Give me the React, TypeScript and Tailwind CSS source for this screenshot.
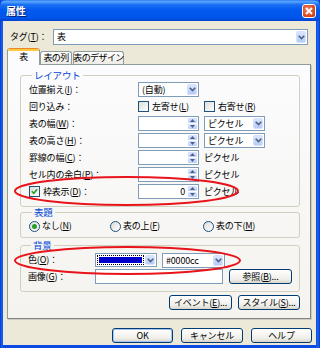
import React from "react";

const U = ({ c }: { c: string }) => <span className="underline underline-offset-[1px]">{c}</span>;

function Chevron() {
  return (
    <svg width="7" height="5" viewBox="0 0 7 5">
      <path d="M0.7 0.7 L3.5 3.5 L6.3 0.7" stroke="#4D6185" strokeWidth="1.6" fill="none" />
    </svg>
  );
}

function DropBtn() {
  return (
    <div className="w-[10px] shrink-0 self-stretch flex items-center justify-center rounded-[2px] border border-[#d6e2fd] bg-[linear-gradient(to_bottom,#dbe6fe,#b7cbf8)]">
      <Chevron />
    </div>
  );
}

function Select({ text, className }: { text: React.ReactNode; className: string }) {
  return (
    <div className={"flex h-[15px] border border-[#7F9DB9] bg-white p-px " + className}>
      <div className="flex-1 pl-[2px] leading-[11px] whitespace-nowrap overflow-hidden">{text}</div>
      <DropBtn />
    </div>
  );
}

function Tri({ up }: { up?: boolean }) {
  return (
    <svg width="5" height="3" viewBox="0 0 5 3">
      <path d={up ? "M0 3 L2.5 0 L5 3 Z" : "M0 0 L2.5 3 L5 0 Z"} fill="#4D6185" />
    </svg>
  );
}

function Spin({ value }: { value?: string }) {
  return (
    <div className="flex h-[15px] w-[61px] border border-[#7F9DB9] bg-white p-px">
      <div className="flex-1 text-right pr-[3px] leading-[11px]">{value}</div>
      <div className="w-[9px] flex flex-col gap-px">
        <div className="flex-1 flex items-center justify-center rounded-[1px] bg-[linear-gradient(to_bottom,#dbe6fe,#bccffa)]">
          <Tri up />
        </div>
        <div className="flex-1 flex items-center justify-center rounded-[1px] bg-[linear-gradient(to_bottom,#dbe6fe,#bccffa)]">
          <Tri />
        </div>
      </div>
    </div>
  );
}

function Check({ checked }: { checked?: boolean }) {
  return (
    <div className="w-[11px] h-[11px] shrink-0 border border-[#1C5180] bg-[linear-gradient(135deg,#dcdcd7,#ffffff)] flex items-center justify-center">
      {checked && (
        <svg width="7" height="7" viewBox="0 0 7 7">
          <path d="M0.8 3.2 L2.8 5.2 L6.2 1.2" stroke="#21A121" strokeWidth="1.6" fill="none" />
        </svg>
      )}
    </div>
  );
}

function Radio({ on }: { on?: boolean }) {
  return (
    <div className="w-[11px] h-[11px] shrink-0 rounded-full border border-[#1C5180] bg-[linear-gradient(135deg,#dcdcd7,#ffffff)] flex items-center justify-center">
      {on && <div className="w-[5px] h-[5px] rounded-full bg-[#2a9c2a]" />}
    </div>
  );
}

function Btn({ children, className }: { children: React.ReactNode; className: string }) {
  return (
    <div
      className={
        "h-[15px] border border-[#003C74] rounded-[3px] bg-[linear-gradient(to_bottom,#ffffff,#f0efea_70%,#d8d5c9)] flex items-center justify-center leading-[11px] whitespace-nowrap " +
        className
      }
    >
      {children}
    </div>
  );
}

function Group({ title, children, className }: { title: string; children: React.ReactNode; className: string }) {
  return (
    <fieldset className={"border border-[#D0D0BF] rounded-[3px] " + className}>
      <legend className="ml-[3px] px-[2px] text-[#0046D5] leading-[10px] text-[9.5px]">{title}</legend>
      {children}
    </fieldset>
  );
}

export default function App() {
  return (
    <div className="relative w-[320px] h-[348px] overflow-hidden font-['Noto_Sans_CJK_JP',sans-serif] text-[9px] leading-[12px] tracking-[-0.2px] whitespace-nowrap text-black bg-[linear-gradient(to_right,#0831d9,#166aee_2px,#0a4ae0_3px,#0a4ae0_316px,#166aee_318px,#0831d9)] flex flex-col">
      {/* Title bar */}
      <div className="h-[21px] shrink-0 flex items-center justify-between pl-[6px] pr-[4px] rounded-t-[6px] bg-[linear-gradient(to_bottom,#2c7cf5_0%,#5aa6ff_8%,#1a6ff3_22%,#0058ee_50%,#0055ea_85%,#0043cf_100%)]">
        <span className="text-white font-bold text-[10px] leading-[13px] [text-shadow:1px_1px_0_#0a1e6e]">属性</span>
        <div className="w-[14px] h-[14px] rounded-[3px] border border-white bg-[radial-gradient(circle_at_40%_40%,#f08a6a,#dd4a22_60%,#c2350e)] flex items-center justify-center">
          <svg width="8" height="8" viewBox="0 0 8 8">
            <path d="M1 1 L7 7 M7 1 L1 7" stroke="white" strokeWidth="1.8" />
          </svg>
        </div>
      </div>

      {/* Body */}
      <div className="flex-1 flex flex-col ml-[3px] mr-[4px] mb-[3px] bg-[#ECE9D8] pl-[4px] pr-[5px]">
        {/* Tag row */}
        <div className="mt-[8px] flex items-center pl-[3px] pr-[3px] h-[16px]">
          <div className="w-[43px] shrink-0">
            タグ(<U c="T" />)：
          </div>
          <div className="flex-1 flex h-[16px] border border-[#7F9DB9] bg-white p-px">
            <div className="flex-1 pl-[2px] leading-[12px]">表</div>
            <DropBtn />
          </div>
        </div>

        {/* Tabs */}
        <div className="mt-[3px] flex items-end h-[16px] relative z-10 tracking-[-0.6px]">
          <div className="w-[33px] h-[17px] -mb-px border-x border-[#919B9C] rounded-t-[3px] bg-[#FCFCFE] flex flex-col items-center overflow-hidden">
            <div className="w-full h-[1px] bg-[#E68B2C]" />
            <div className="w-full h-[2px] bg-[#FFC73C]" />
            <div className="leading-[12px]">表</div>
          </div>
          <div className="w-[32px] h-[13px] border border-b-0 border-[#919B9C] rounded-t-[3px] bg-[linear-gradient(to_bottom,#ffffff,#ecebe6)] flex items-center justify-center">
            表の列
          </div>
          <div className="ml-px w-[51px] h-[13px] border border-b-0 border-[#919B9C] rounded-t-[3px] bg-[linear-gradient(to_bottom,#ffffff,#ecebe6)] flex items-center justify-center">
            表のデザイン
          </div>
        </div>

        {/* Panel */}
        <div className="h-[255px] border border-[#919B9C] border-r-[#7f8586] border-b-[#7f8586] shadow-[1px_1px_0_#d0cdbf] bg-[linear-gradient(to_bottom,#fcfcfe,#f4f3ee)] pl-[12px] pr-[10px] pt-[5px] flex flex-col">
          <Group title="レイアウト" className="px-[8px] pt-[2px] pb-[7px]">
            <div className="grid grid-cols-[104px_61px_61px] gap-x-[5px] gap-y-[2px] items-center">
              <div>
                位置揃え(<U c="I" />)：
              </div>
              <Select text="(自動)" className="w-[61px]" />
              <div />

              <div className="h-[15px] flex items-center">回り込み：</div>
              <div className="flex items-center gap-[3px]">
                <Check />
                <span>
                  左寄せ(<U c="L" />)
                </span>
              </div>
              <div className="flex items-center gap-[3px]">
                <Check />
                <span>
                  右寄せ(<U c="R" />)
                </span>
              </div>

              <div>
                表の幅(<U c="W" />)：
              </div>
              <Spin />
              <Select text="ピクセル" className="w-[61px]" />

              <div>
                表の高さ(<U c="H" />)：
              </div>
              <Spin />
              <Select text="ピクセル" className="w-[61px]" />

              <div>
                罫線の幅(<U c="C" />)：
              </div>
              <Spin />
              <div>ピクセル</div>

              <div>
                セル内の余白(<U c="P" />)：
              </div>
              <Spin />
              <div>ピクセル</div>

              <div className="flex items-center gap-[3px]">
                <Check checked />
                <span>
                  枠表示(<U c="D" />)：
                </span>
              </div>
              <Spin value="0" />
              <div>ピクセル</div>
            </div>
          </Group>

          <Group title="表題" className="px-[8px] pt-[3px] pb-[5px]">
            <div className="grid grid-cols-[81px_93px_auto] items-center h-[12px]">
              <div className="flex items-center gap-[2px]">
                <Radio on />
                <span>
                  なし(<U c="N" />)
                </span>
              </div>
              <div className="flex items-center gap-[2px]">
                <Radio />
                <span>
                  表の上(<U c="F" />)
                </span>
              </div>
              <div className="flex items-center gap-[2px]">
                <Radio />
                <span>
                  表の下(<U c="M" />)
                </span>
              </div>
            </div>
          </Group>

          <Group title="背景" className="mt-[2px] px-[7px] pt-[3px] pb-[7px]">
            <div className="flex flex-col gap-[2px]">
              <div className="flex items-center h-[14px]">
                <div className="w-[67px] shrink-0">
                  色(<U c="O" />)：
                </div>
                <div className="flex h-[14px] w-[62px] border border-[#7F9DB9] bg-white p-px">
                  <div className="flex-1 border border-dotted border-black p-px mr-px">
                    <div className="w-full h-full bg-[#0000CC]" />
                  </div>
                  <DropBtn />
                </div>
                <div className="ml-[5px]">
                  <Select text="#0000cc" className="w-[63px] h-[14px]" />
                </div>
              </div>
              <div className="flex items-center h-[15px]">
                <div className="w-[67px] shrink-0">
                  画像(<U c="G" />)：
                </div>
                <div className="w-[128px] h-[15px] border border-[#7F9DB9] bg-white" />
                <Btn className="ml-[6px] w-[63px]">
                  <span>
                    参照(<U c="B" />)...
                  </span>
                </Btn>
              </div>
            </div>
          </Group>

          <div className="mt-[3px] flex justify-end gap-[6px]">
            <Btn className="w-[63px]">
              <span>
                イベント(<U c="E" />)...
              </span>
            </Btn>
            <Btn className="w-[62px]">
              <span>
                スタイル(<U c="S" />)...
              </span>
            </Btn>
          </div>
        </div>

        {/* Bottom buttons */}
        <div className="mt-[9px] flex justify-end gap-[8px] -mr-px">
          <Btn className="w-[61px] shadow-[inset_0_0_0_1px_#a8c4f5]">OK</Btn>
          <Btn className="w-[62px]">キャンセル</Btn>
          <Btn className="w-[61px]">ヘルプ</Btn>
        </div>
      </div>

      {/* Red annotation ellipses */}
      <svg className="absolute inset-0 pointer-events-none" width="320" height="348" viewBox="0 0 320 348">
        <ellipse cx="126.5" cy="191" rx="111.5" ry="14" fill="none" stroke="#E8141B" strokeWidth="2" />
        <ellipse cx="127.5" cy="260.5" rx="112.5" ry="13.5" fill="none" stroke="#E8141B" strokeWidth="2" />
      </svg>
    </div>
  );
}
